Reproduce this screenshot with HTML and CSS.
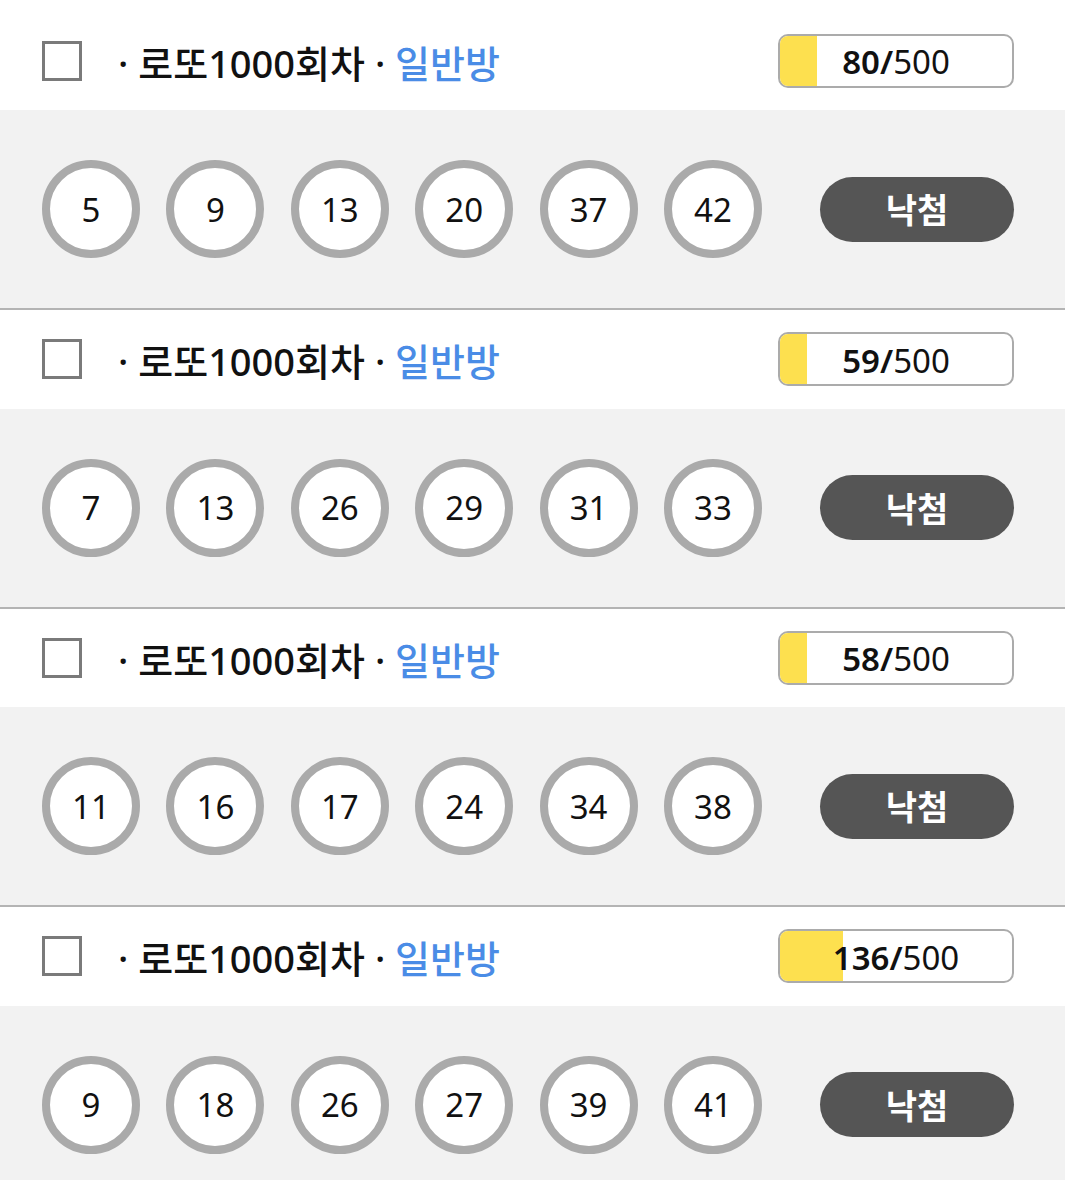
FILE: index.html
```html
<!DOCTYPE html>
<html lang="ko">
<head>
  <meta charset="UTF-8" />
  <meta name="viewport" content="width=device-width, initial-scale=1.0"/>
  <title>로또 참여 내역</title>
  <link rel="stylesheet" href="styles.css">
</head>
<body>
  <div class="topo"></div>

  <div class="lista">
    <div class="item">
      <div class="cabecalho">
        <span class="check"></span>
        <span class="titulo">· 로또1000회차 · <span class="sala">일반방</span></span>
        <div class="medidor">
          <div class="preenchido" style="width: 16%"></div>
          <span class="contagem"><b>80/</b>500</span>
        </div>
      </div>
      <div class="corpo">
        <div class="bolas">
          <span class="bola">5</span>
          <span class="bola">9</span>
          <span class="bola">13</span>
          <span class="bola">20</span>
          <span class="bola">37</span>
          <span class="bola">42</span>
        </div>
        <button class="resultado">낙첨</button>
      </div>
    </div>

    <div class="item">
      <div class="cabecalho">
        <span class="check"></span>
        <span class="titulo">· 로또1000회차 · <span class="sala">일반방</span></span>
        <div class="medidor">
          <div class="preenchido" style="width: 11.8%"></div>
          <span class="contagem"><b>59/</b>500</span>
        </div>
      </div>
      <div class="corpo">
        <div class="bolas">
          <span class="bola">7</span>
          <span class="bola">13</span>
          <span class="bola">26</span>
          <span class="bola">29</span>
          <span class="bola">31</span>
          <span class="bola">33</span>
        </div>
        <button class="resultado">낙첨</button>
      </div>
    </div>

    <div class="item">
      <div class="cabecalho">
        <span class="check"></span>
        <span class="titulo">· 로또1000회차 · <span class="sala">일반방</span></span>
        <div class="medidor">
          <div class="preenchido" style="width: 11.6%"></div>
          <span class="contagem"><b>58/</b>500</span>
        </div>
      </div>
      <div class="corpo">
        <div class="bolas">
          <span class="bola">11</span>
          <span class="bola">16</span>
          <span class="bola">17</span>
          <span class="bola">24</span>
          <span class="bola">34</span>
          <span class="bola">38</span>
        </div>
        <button class="resultado">낙첨</button>
      </div>
    </div>

    <div class="item">
      <div class="cabecalho">
        <span class="check"></span>
        <span class="titulo">· 로또1000회차 · <span class="sala">일반방</span></span>
        <div class="medidor">
          <div class="preenchido" style="width: 27.2%"></div>
          <span class="contagem"><b>136/</b>500</span>
        </div>
      </div>
      <div class="corpo">
        <div class="bolas">
          <span class="bola">9</span>
          <span class="bola">18</span>
          <span class="bola">26</span>
          <span class="bola">27</span>
          <span class="bola">39</span>
          <span class="bola">41</span>
        </div>
        <button class="resultado">낙첨</button>
      </div>
    </div>
  </div>
</body>
</html>
```

FILE: styles.css
```css
* {
  box-sizing: border-box;
  margin: 0;
  padding: 0;
  font-family: 'Noto Sans', 'Noto Sans CJK KR', sans-serif;
}

body {
  background-color: #f2f2f2;
  color: #111;
}

.topo {
  height: 11.5px;
  background: white;
}

.item {
  border-top: 2px solid #b4b4b4;
}

.item:first-child {
  border-top: none;
}

.cabecalho {
  height: 98.5px;
  background: white;
  display: flex;
  align-items: center;
  padding: 0 51px 0 42px;
}

.check {
  width: 40px;
  height: 40px;
  border: 3px solid #7a7a7a;
  background: white;
  margin-right: 36px;
}

.titulo {
  font-size: 38px;
  font-weight: 500;
  line-height: 1;
  margin-top: 4px;
}

.sala {
  color: #4a8ce6;
}

.medidor {
  margin-left: auto;
  width: 236px;
  height: 54px;
  border: 2px solid #ababab;
  border-radius: 10px;
  overflow: hidden;
  position: relative;
  display: flex;
  align-items: center;
  justify-content: center;
  background: white;
}

.preenchido {
  position: absolute;
  left: 0;
  top: 0;
  bottom: 0;
  background: #fde04f;
}

.contagem {
  position: relative;
  font-size: 33px;
  font-weight: 400;
  line-height: 1;
  margin-top: 2px;
}

.contagem b {
  font-weight: 600;
}

.corpo {
  height: 198px;
  display: flex;
  align-items: center;
  padding: 0 51px 0 42px;
}

.bolas {
  display: flex;
  gap: 26.4px;
}

.bola {
  width: 98px;
  height: 98px;
  border: 8px solid #aaaaaa;
  border-radius: 50%;
  background: white;
  display: flex;
  align-items: center;
  justify-content: center;
  font-size: 33px;
  line-height: 1;
}

.resultado {
  margin-left: auto;
  width: 194px;
  height: 65px;
  border: none;
  border-radius: 33px;
  background: #555555;
  color: white;
  font-family: 'Noto Sans CJK KR', sans-serif;
  font-size: 34px;
  font-weight: 700;
  line-height: 1;
}
```
